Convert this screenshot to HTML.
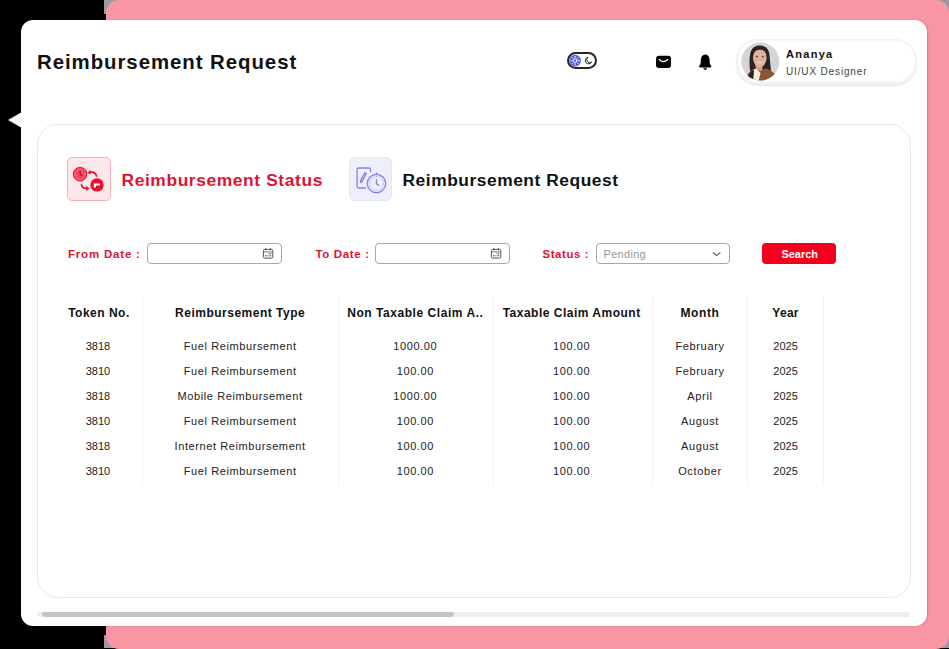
<!DOCTYPE html>
<html><head><meta charset="utf-8">
<style>
html,body{margin:0;padding:0;width:949px;height:649px;overflow:hidden;background:#000;font-family:"Liberation Sans",sans-serif;}
.a{position:absolute;}
.t{position:absolute;white-space:nowrap;line-height:1;}
#gray1{left:104px;top:0;width:20px;height:14px;background:#9a9a9a;}
#gray2{left:104px;top:635px;width:20px;height:13px;background:#9a9a9a;}
#gray3{left:930px;top:0;width:19px;height:16px;background:#9a9a9a;}
#gray4{left:930px;top:633px;width:19px;height:15px;background:#9a9a9a;}
#pink{left:106px;top:0;width:843px;height:649px;background:#f996a4;border-radius:13px;}
#card{left:21.2px;top:20px;width:905.8px;height:606px;background:#fff;border-radius:12px;box-shadow:1px 0 1.5px rgba(90,20,30,0.22);}
#notch{left:8px;top:112px;width:0;height:0;border-top:8px solid transparent;border-bottom:8px solid transparent;border-right:14px solid #fff;}
#inner{left:36.8px;top:123.8px;width:872.2px;height:472.6px;border:1px solid #e8e7f6;border-radius:21px;}
.red{color:#dc1535;}
.sep{position:absolute;top:296px;height:188px;width:1px;background:#f2f2f2;}
.hd{position:absolute;top:307px;font-weight:700;font-size:12px;color:#111;text-align:center;white-space:nowrap;line-height:12px;}
.row{position:absolute;left:0;width:949px;height:12px;}
.c{position:absolute;top:0;font-size:11px;color:#222;text-align:center;white-space:nowrap;line-height:12px;}
.c1{left:54.1px;width:87.6px;}
.c2{left:142.4px;width:195.5px;letter-spacing:0.6px;}
.c3{left:337.9px;width:154.9px;letter-spacing:0.6px;}
.c4{left:491.8px;width:159.7px;letter-spacing:0.6px;}
.c5{left:652.5px;width:95px;letter-spacing:0.65px;}
.c6{left:747.5px;width:76.1px;}
.inp{position:absolute;top:243px;height:19.2px;border:1px solid #a8a8a8;border-radius:4px;background:#fff;box-sizing:content-box;}
.lbl{position:absolute;top:248px;font-size:11.5px;font-weight:700;color:#e01232;white-space:nowrap;line-height:12px;}
</style></head>
<body>
<div class="a" id="gray1"></div><div class="a" id="gray2"></div><div class="a" id="gray3"></div><div class="a" id="gray4"></div>
<div class="a" id="pink"></div>
<div class="a" id="card"></div>
<div class="a" id="notch"></div>

<div class="t" style="left:37px;top:51.5px;font-size:20.4px;font-weight:700;color:#111;letter-spacing:0.95px;">Reimbursement Request</div>

<!-- toggle -->
<div class="a" style="left:566.5px;top:52px;width:26.2px;height:12.6px;border:2px solid #262626;border-radius:9px;"></div>
<svg class="a" style="left:566px;top:52px" width="32" height="18" viewBox="0 0 32 18">
  <circle cx="9.1" cy="8.6" r="5.8" fill="#5a5ce8"/>
  <g stroke="#fff" stroke-width="0.9" stroke-linecap="round">
    <circle cx="9.1" cy="8.6" r="1.8" fill="none"/>
    <line x1="9.1" y1="4.4" x2="9.1" y2="5.6"/><line x1="9.1" y1="11.6" x2="9.1" y2="12.8"/>
    <line x1="4.9" y1="8.6" x2="6.1" y2="8.6"/><line x1="12.1" y1="8.6" x2="13.3" y2="8.6"/>
    <line x1="6.1" y1="5.6" x2="6.9" y2="6.4"/><line x1="11.3" y1="10.8" x2="12.1" y2="11.6"/>
    <line x1="12.1" y1="5.6" x2="11.3" y2="6.4"/><line x1="6.9" y1="10.8" x2="6.1" y2="11.6"/>
  </g>
  <path d="M21.9 5.3 A3.3 3.3 0 1 0 25.6 10 A2.7 2.7 0 0 1 21.9 5.3 Z" fill="#fff" stroke="#222" stroke-width="1"/>
</svg>

<!-- mail -->
<svg class="a" style="left:655px;top:55px" width="17" height="14" viewBox="0 0 17 14">
  <rect x="1" y="0.7" width="15" height="12.2" rx="3" fill="#000"/>
  <path d="M4.3 4.5 Q8.5 8.6 12.7 4.5" fill="none" stroke="#fff" stroke-width="1.1" stroke-linecap="round"/>
</svg>
<!-- bell -->
<svg class="a" style="left:698px;top:53px" width="15" height="19" viewBox="0 0 15 19">
  <path d="M7.2 1.5 C4.4 1.5 3 3.8 2.8 6.8 L2.6 10.4 C2.4 11.6 1.2 12.2 1.1 13.2 C1.1 14 1.5 14.4 2.3 14.4 L12.1 14.4 C12.9 14.4 13.3 14 13.3 13.2 C13.2 12.2 12 11.6 11.8 10.4 L11.6 6.8 C11.4 3.8 10 1.5 7.2 1.5 Z" fill="#000"/>
  <path d="M5.3 14.8 A1.9 2.3 0 0 0 9.1 14.8 Z" fill="#3a3a3a"/>
</svg>

<!-- profile -->
<div class="a" style="left:736px;top:38.5px;width:178.5px;height:44.5px;border:1px solid #f0f0f0;border-radius:22px;background:#fff;box-shadow:inset 0 -2px 3px rgba(0,0,0,0.07), inset 0 1px 2px rgba(0,0,0,0.04), 0 1px 1.5px rgba(0,0,0,0.10);"></div>
<svg class="a" style="left:741px;top:42px" width="39" height="39" viewBox="0 0 39 39">
  <defs><clipPath id="av"><circle cx="19.3" cy="19.5" r="19"/></clipPath></defs>
  <g clip-path="url(#av)">
    <rect width="39" height="39" fill="#d4d5d9"/>
    <path d="M10.5 36 C8.5 28 8 20 9 13 C10 6 14 3.6 19 3.6 C24.5 3.6 28 7 28.5 13 C29 19 29.5 24 30 29 L26 31 L12 36 Z" fill="#2e2220"/>
    <path d="M14.6 22 L14.6 29 L21.5 29 L21.5 22 Z" fill="#cf9e84"/>
    <ellipse cx="18.8" cy="15.8" rx="6.8" ry="9.3" fill="#dcb39b"/>
    <path d="M11.8 12.5 C12.5 7 15.5 5.2 19 5.2 C22.5 5.2 25.5 7 26.2 12.5 C24 8.5 21.5 7.8 19 7.8 C16.5 7.8 14 8.5 11.8 12.5 Z" fill="#2e2220"/>
    <ellipse cx="15.9" cy="14.6" rx="1.2" ry="0.8" fill="#6a4a3e"/><ellipse cx="21.9" cy="14.6" rx="1.2" ry="0.8" fill="#6a4a3e"/><path d="M15.8 19.8 Q18.9 21.8 22 19.8" fill="none" stroke="#efd9cc" stroke-width="1.1"/>
    <path d="M4 39 C6 31 10 27.5 15 26.5 L19.5 29.5 L24 26.5 C30 27.5 35 31 37 39 Z" fill="#8c5636"/>
    <path d="M12.5 27.5 L15.5 26.8 L19.5 31 L17.5 39 L12 39 Z" fill="#f2eee6"/>
    <path d="M8 33 C9 30 11 28.5 13 28 L12 39 L6 39 Z" fill="#2e2220"/>
  </g>
</svg>
<div class="t" style="left:786px;top:49px;font-size:11px;font-weight:700;color:#111;letter-spacing:1.3px;">Ananya</div>
<div class="t" style="left:786px;top:67px;font-size:10px;color:#444;letter-spacing:0.85px;">UI/UX Designer</div>

<div class="a" id="inner"></div>

<!-- tabs -->
<div class="a" style="left:67px;top:157px;width:42px;height:41.6px;border:1px solid #f4b3bb;border-radius:5px;background:#fde7ea;"></div>
<svg class="a" style="left:67px;top:157px" width="44" height="44" viewBox="0 0 44 44">
  <circle cx="13.1" cy="17.2" r="6.8" fill="#f14862" stroke="#e0102f" stroke-width="1"/>
  <circle cx="13.1" cy="17.2" r="4.9" fill="none" stroke="#fbb8c2" stroke-width="0.8" stroke-dasharray="0.8 1.1"/>
  <path d="M13.1 13.8 L13.1 17.4 L15.2 18.8" fill="none" stroke="#c80a28" stroke-width="1.3"/>
  <circle cx="30" cy="27.9" r="6.7" fill="#e8102f"/>
  <path d="M26.8 26.6 H33 V28.4 H28.9 V30.6 H26.8 Z" fill="#fff"/>
  <path d="M22.5 15.3 C26.2 14.4 28.8 15.8 29.8 19.6" fill="none" stroke="#e0102f" stroke-width="1.7"/>
  <path d="M20.4 15.7 L23.6 13 L23.5 17.6 Z" fill="#e0102f"/>
  <path d="M14.4 27.2 C14.5 30 17 31.5 20 31.5" fill="none" stroke="#e0102f" stroke-width="1.7"/>
  <path d="M22.4 31.5 L19.2 28.8 L19.4 34 Z" fill="#e0102f"/>
</svg>
<div class="t" style="left:121.5px;top:171.5px;font-size:17.4px;font-weight:700;color:#e01232;letter-spacing:0.6px;">Reimbursement Status</div>

<div class="a" style="left:348.5px;top:157px;width:41.5px;height:41.6px;border:1px solid #e5e5f8;border-radius:6px;background:#eeeefd;"></div>
<svg class="a" style="left:348px;top:157px" width="44" height="44" viewBox="0 0 44 44">
  <g fill="none" stroke="#8184e6" stroke-width="1.3">
    <path d="M22.5 15.2 V12.5 A1.5 1.5 0 0 0 21 11 H10.6 A1.5 1.5 0 0 0 9.1 12.5 V29.5 A1.5 1.5 0 0 0 10.6 31 H18"/>
    <path d="M16.8 15.8 L12.5 23.8 L12.5 25.6 L14 24.6 L18.3 16.6 Z" stroke-linejoin="round"/>
    <circle cx="28.5" cy="26.5" r="9.2"/>
    <circle cx="28.5" cy="26.5" r="7" stroke-width="0.9" stroke-dasharray="1.2 1.5"/>
    <path d="M28.5 22 V26.8 L31 28.8"/>
    <path d="M28.5 17.3 V15.5"/>
  </g>
</svg>
<div class="t" style="left:402.5px;top:171.5px;font-size:17.4px;font-weight:700;color:#111;letter-spacing:0.53px;">Reimbursement Request</div>

<!-- filters -->
<div class="lbl" style="left:68px;letter-spacing:0.8px;">From Date :</div>
<div class="inp" style="left:147px;width:132.5px;"></div>
<svg class="a" style="left:262px;top:247px" width="12" height="12" viewBox="0 0 12 12">
  <rect x="1.4" y="2.4" width="9.4" height="8.7" rx="1.3" fill="none" stroke="#555" stroke-width="1"/>
  <line x1="1.4" y1="4.9" x2="10.8" y2="4.9" stroke="#555" stroke-width="0.8"/>
  <line x1="3.8" y1="1" x2="3.8" y2="3.4" stroke="#555" stroke-width="1"/><line x1="8.4" y1="1" x2="8.4" y2="3.4" stroke="#555" stroke-width="1"/>
  <rect x="6.6" y="6.2" width="1.1" height="1.1" fill="#555"/><rect x="8.2" y="6.2" width="1.1" height="1.1" fill="#555"/>
  <rect x="3" y="8.2" width="1.1" height="1.1" fill="#555"/><rect x="4.6" y="8.2" width="1.1" height="1.1" fill="#555"/><rect x="6.6" y="8.2" width="1.1" height="1.1" fill="#555"/><rect x="8.2" y="8.2" width="1.1" height="1.1" fill="#555"/>
</svg>
<div class="lbl" style="left:315.5px;letter-spacing:0.65px;">To Date :</div>
<div class="inp" style="left:375px;width:132.5px;"></div>
<svg class="a" style="left:490px;top:247px" width="12" height="12" viewBox="0 0 12 12">
  <rect x="1.4" y="2.4" width="9.4" height="8.7" rx="1.3" fill="none" stroke="#555" stroke-width="1"/>
  <line x1="1.4" y1="4.9" x2="10.8" y2="4.9" stroke="#555" stroke-width="0.8"/>
  <line x1="3.8" y1="1" x2="3.8" y2="3.4" stroke="#555" stroke-width="1"/><line x1="8.4" y1="1" x2="8.4" y2="3.4" stroke="#555" stroke-width="1"/>
  <rect x="6.6" y="6.2" width="1.1" height="1.1" fill="#555"/><rect x="8.2" y="6.2" width="1.1" height="1.1" fill="#555"/>
  <rect x="3" y="8.2" width="1.1" height="1.1" fill="#555"/><rect x="4.6" y="8.2" width="1.1" height="1.1" fill="#555"/><rect x="6.6" y="8.2" width="1.1" height="1.1" fill="#555"/><rect x="8.2" y="8.2" width="1.1" height="1.1" fill="#555"/>
</svg>
<div class="lbl" style="left:542.5px;letter-spacing:0.55px;">Status :</div>
<div class="inp" style="left:596.4px;width:131.5px;"></div>
<div class="t" style="left:603.5px;top:248.6px;font-size:11px;color:#979797;letter-spacing:0.3px;">Pending</div>
<svg class="a" style="left:711px;top:250px" width="12" height="8" viewBox="0 0 12 8">
  <path d="M1.8 2.3 L5.6 5.6 L9.4 2.3" fill="none" stroke="#555" stroke-width="1.1"/>
</svg>
<div class="a" style="left:762.4px;top:243px;width:73.5px;height:21px;background:#f2001e;border-radius:4px;"></div>
<div class="t" style="left:781.5px;top:248.6px;font-size:11px;font-weight:700;color:#fff;letter-spacing:-0.05px;">Search</div>

<!-- table -->
<div class="sep" style="left:142px"></div>
<div class="sep" style="left:337.5px"></div>
<div class="sep" style="left:492.5px"></div>
<div class="sep" style="left:652px"></div>
<div class="sep" style="left:747px"></div>
<div class="sep" style="left:823px"></div>

<div class="hd c1" style="letter-spacing:0.5px;padding-left:2.2px;box-sizing:border-box">Token No.</div>
<div class="hd c2" style="letter-spacing:0.5px">Reimbursement Type</div>
<div class="hd c3" style="letter-spacing:0.55px">Non Taxable Claim A..</div>
<div class="hd c4" style="letter-spacing:0.5px">Taxable Claim Amount</div>
<div class="hd c5" style="letter-spacing:0.6px">Month</div>
<div class="hd c6" style="letter-spacing:0.3px">Year</div>

<div class="row" style="top:340px"><div class="c c1">3818</div><div class="c c2">Fuel Reimbursement</div><div class="c c3">1000.00</div><div class="c c4">100.00</div><div class="c c5">February</div><div class="c c6">2025</div></div>
<div class="row" style="top:365px"><div class="c c1">3810</div><div class="c c2">Fuel Reimbursement</div><div class="c c3">100.00</div><div class="c c4">100.00</div><div class="c c5">February</div><div class="c c6">2025</div></div>
<div class="row" style="top:390px"><div class="c c1">3818</div><div class="c c2">Mobile Reimbursement</div><div class="c c3">1000.00</div><div class="c c4">100.00</div><div class="c c5">April</div><div class="c c6">2025</div></div>
<div class="row" style="top:415px"><div class="c c1">3810</div><div class="c c2">Fuel Reimbursement</div><div class="c c3">100.00</div><div class="c c4">100.00</div><div class="c c5">August</div><div class="c c6">2025</div></div>
<div class="row" style="top:440px"><div class="c c1">3818</div><div class="c c2">Internet Reimbursement</div><div class="c c3">100.00</div><div class="c c4">100.00</div><div class="c c5">August</div><div class="c c6">2025</div></div>
<div class="row" style="top:465px"><div class="c c1">3810</div><div class="c c2">Fuel Reimbursement</div><div class="c c3">100.00</div><div class="c c4">100.00</div><div class="c c5">October</div><div class="c c6">2025</div></div>

<!-- scrollbar -->
<div class="a" style="left:37px;top:612.2px;width:873px;height:4.7px;background:#eeeeee;border-radius:2.4px;"></div>
<div class="a" style="left:42px;top:612.2px;width:412px;height:4.7px;background:#c4c4c4;border-radius:2.4px;"></div>

</body></html>
